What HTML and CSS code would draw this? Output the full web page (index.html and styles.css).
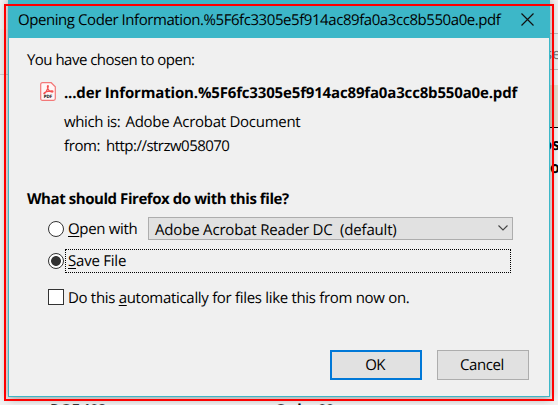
FILE: index.html
```html
<!DOCTYPE html>
<html lang="en">
<head>
<meta charset="utf-8">
<title>Opening Coder Information</title>
<link rel="stylesheet" href="styles.css">
</head>
<body>
<div class="desktop">
  <div class="behind-left"></div>
  <div class="behind-right"><span class="field">se</span><span class="band"></span><span class="word one">os</span><span class="word two">to</span></div>
  <span class="below code">DOE 108</span><span class="below order">Order 00</span>
  <main class="dialog">
    <header class="titlebar">
      <h1><span class="t-title">Opening Coder Information.%5F6fc3305e5f914ac89fa0a3cc8b550a0e.pdf</span></h1>
      <svg class="close" viewBox="0 0 13 13"><path d="M.5.5l12 12M12.5.5l-12 12"/></svg>
    </header>
    <section class="content">
      <p class="intro"><span class="t-intro">You have chosen to open:</span></p>
      <div class="file">
        <svg class="pdf" viewBox="0 0 16 19"><path class="page" d="M2.5.7h8.7l4.1 4v11.8q0 1.8-1.8 1.8h-11Q.7 18.3.7 16.500V2.500Q.7.7 2.500.7z"/><path class="mark" d="M8 3.600c-1.200 0-.4 3 1 4.700 1.500 1.800 4 2.200 4 1.200 0-1.200-6.300-.3-8.300 1-1.600 1.100-.6 1.900.5.500C6.500 9.400 9.200 3.600 8 3.600z"/><text x="8" y="16" text-anchor="middle">PDF</text></svg>
        <div class="details">
          <strong><span class="t-name">...der Information.%5F6fc3305e5f914ac89fa0a3cc8b550a0e.pdf</span></strong>
          <p class="row kind"><span class="t-which">which is:</span><span class="t-kind">Adobe Acrobat Document</span></p>
          <p class="row from"><span class="t-from">from:</span><span class="t-url">http://strzw058070</span></p>
        </div>
      </div>
      <h2><span class="t-question">What should Firefox do with this file?</span></h2>
      <div class="choice open">
        <i class="radio"></i><label class="t-open"><u>O</u>pen with</label>
        <div class="select"><span class="t-app">Adobe Acrobat Reader DC&nbsp; (default)</span><svg class="arrow" viewBox="0 0 10 6"><path d="M.5.5L5 5 9.500.5"/></svg></div>
      </div>
      <div class="choice save"><i class="radio checked"></i><div class="focus"><label class="t-save"><u>S</u>ave File</label></div></div>
      <div class="choice remember"><i class="checkbox"></i><label class="t-auto">Do this <u>a</u>utomatically for files like this from now on.</label></div>
      <footer><div class="button ok"><span class="t-ok">OK</span></div><div class="button"><span class="t-cancel">Cancel</span></div></footer>
    </section>
  </main>
  <div class="highlight"></div>
</div>
</body>
</html>
```
FILE: styles.css
```css
* { box-sizing: border-box; margin: 0; padding: 0; }
body { font: 15px/20px "Open Sans", "Noto Sans", sans-serif; color: #000; overflow: hidden; text-rendering: geometricPrecision; }
.desktop { position: relative; width: 558px; height: 405px; padding-left: 8px; background: #f2f2f2; overflow: hidden; }
.dialog { position: relative; display: flex; flex-direction: column; width: 542px; height: 397px; border: 1px solid #3db7c8; border-top: 0; background: #f0f0f0; box-shadow: 0 1px 9px rgba(0,0,0,.42); }
.titlebar { display: flex; flex: none; justify-content: space-between; height: 38px; padding: 10px 15px 0 9px; background: #3db7c8; }
h1, h2 { font-size: inherit; white-space: nowrap; }
h1 { font-weight: 400; }
.close { width: 13px; height: 13px; margin-top: 3px; fill: none; stroke: #111; stroke-width: 1.2; }
.content { display: flex; flex: 1; flex-direction: column; padding: 12px 20px 16px 18px; white-space: nowrap; }
.intro { height: 32px; }
.file { display: flex; gap: 8px; height: 107px; padding-left: 13px; }
.pdf { width: 16px; height: 19px; flex: none; }
.page { fill: #fff6f6; stroke: #f37878; stroke-width: 1.2; }
.mark { fill: none; stroke: #f45252; stroke-width: 1.2; }
.pdf text { font: bold 4.5px "Open Sans", sans-serif; }
.details { padding-top: 1px; }
.details strong { display: block; height: 29px; }
.row { display: flex; gap: 5px; height: 24px; }
.kind { gap: 6px; }
.from { gap: 7px; }
.t-kind { margin-left: -1px; }
.t-url { margin-left: -1px; }
h2 { height: 28px; font-weight: 700; }
.choice { display: flex; align-items: center; padding-left: 21px; }
.radio { flex: none; width: 16px; height: 16px; border: 1px solid #333; border-radius: 50%; background: #fff; }
.checked { background: radial-gradient(circle, #333 4.5px, #fff 5.3px); }
.choice label { margin-left: 4px; }
.open { height: 23px; }
.choice .t-open { width: 68px; }
.select { display: flex; align-items: center; justify-content: space-between; width: 365px; height: 23px; margin-left: 12px; padding: 2px 4px 0 6px; border: 1px solid #adadad; background: #e1e1e1; }
.arrow { width: 10px; height: 6px; margin-bottom: 4px; fill: none; stroke: #444; stroke-width: 1.1; }
.save { height: 24px; margin-top: 9px; }
.focus { width: 446px; height: 24px; margin-left: 1px; padding: 1px 0 0 2px; border: 1px dotted #000; }
.choice .t-save { margin-left: 0; display: block; }
.remember { height: 20px; margin-top: 15px; }
.checkbox { flex: none; width: 16px; height: 16px; border: 1px solid #333; background: #fff; margin-bottom: 3px; }
u { text-decoration-thickness: 1px; text-underline-offset: 2px; }
footer { display: flex; justify-content: flex-end; gap: 15px; margin-top: auto; }
.button { display: flex; align-items: center; justify-content: center; width: 92px; height: 30px; border: 1px solid #adadad; background: #e1e1e1; }
.ok { padding-right: 2px; border: 2px solid #0078d7; }
.button .t-cancel { margin-right: 2px; }
.t-title { letter-spacing: -.43px; }
.t-intro { letter-spacing: -.62px; letter-spacing: -.52px; }
.t-name { letter-spacing: -.16px; }
.t-which { letter-spacing: -.37px; }
.t-kind { letter-spacing: -.27px; }
.t-from { letter-spacing: -.4px; }
.t-url { letter-spacing: -.52px; }
.t-question { letter-spacing: -.43px; }
.t-open { letter-spacing: -.33px; }
.t-app { letter-spacing: -.18px; }
.t-save { letter-spacing: -.22px; }
.t-auto { letter-spacing: -.31px; }
.t-ok { letter-spacing: -.6px; }
.t-cancel { letter-spacing: -.4px; }
.highlight { position: absolute; left: 4px; top: 4px; width: 550px; height: 397px; border: 2px solid #f00; }
.behind-left { position: absolute; left: 0; top: 29px; width: 8px; height: 46px; border-bottom: 1px solid #ccc; background: #eee; }
.behind-right { position: absolute; left: 549px; top: 33px; width: 9px; height: 120px; }
.behind-right span { position: absolute; display: block; }
.behind-right .field { left: 0; top: 0; width: 9px; height: 37px; padding-top: 10px; border: solid #bbb; border-width: 1px 0; background: #eee; color: #777; text-indent: -4px; overflow: hidden; }
.behind-right .band { left: 0; top: 52px; width: 9px; height: 43px; background: #e6dfcc; border-bottom: 1px solid #000; }
.behind-right .word { right: -2px; font-weight: 700; font-size: 16px; }
.one { top: 101px; }
.two { top: 124px; }
.below { position: absolute; top: 400px; font: bold 15px/20px "Open Sans", sans-serif; letter-spacing: -.8px; }
.code { left: 50px; }
.order { left: 275px; }
```
